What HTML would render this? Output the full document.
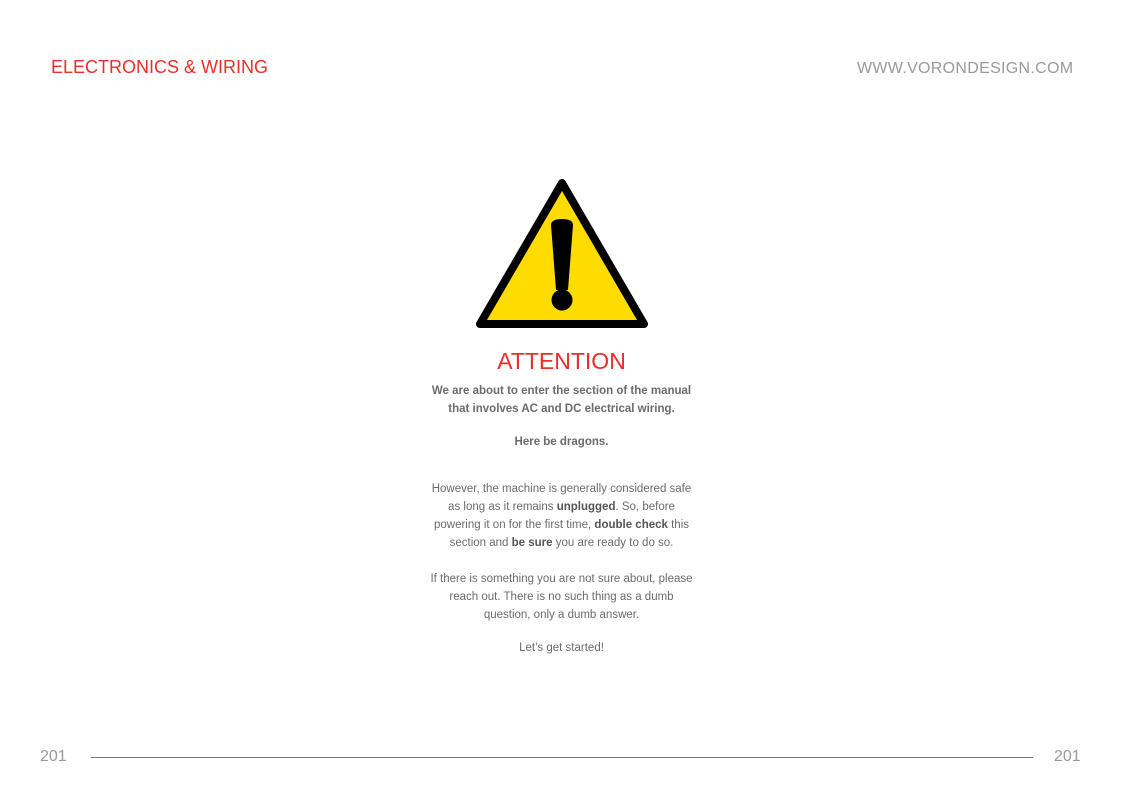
<!DOCTYPE html>
<html><head><meta charset="utf-8"><style>
body{margin:0;width:1123px;height:794px;background:#fff;position:relative;font-family:"Liberation Sans",sans-serif;overflow:hidden}
.a{position:absolute;white-space:nowrap}
.c{position:absolute;left:0;width:1123px;text-align:center;color:#6b6b6b;font-size:11.5px}
b{color:#555}
</style></head><body>
<div class="a" style="left:51px;top:57px;font-size:18px;color:#e8302a">ELECTRONICS &amp; WIRING</div>
<div class="a" style="left:857px;top:60px;font-size:16px;color:#9a9a9a;letter-spacing:0.3px">WWW.VORONDESIGN.COM</div>
<svg class="a" style="left:470px;top:175px" width="184" height="160" viewBox="470 175 184 160">
<path d="M562 183 L644 324 L480 324 Z" fill="#ffdc00" stroke="#000" stroke-width="8" stroke-linejoin="round"/>
<path d="M551 225 Q551 219 562 219 Q573 219 573 225 L568 290 L556 290 Z" fill="#000"/>
<circle cx="562" cy="300" r="10.5" fill="#000"/>
</svg>
<div class="c" style="top:348px;font-size:23px;color:#e8302a">ATTENTION</div>
<div class="c" style="top:382px;font-weight:bold;line-height:18px">We are about to enter the section of the manual<br>that involves AC and DC electrical wiring.</div>
<div class="c" style="top:436px;font-weight:bold">Here be dragons.</div>
<div class="c" style="top:480px;line-height:18px">However, the machine is generally considered safe<br>as long as it remains <b>unplugged</b>. So, before<br>powering it on for the first time, <b>double check</b> this<br>section and <b>be sure</b> you are ready to do so.</div>
<div class="c" style="top:570px;line-height:18px">If there is something you are not sure about, please<br>reach out. There is no such thing as a dumb<br>question, only a dumb answer.</div>
<div class="c" style="top:642px">Let’s get started!</div>
<div class="a" style="left:40px;top:748px;font-size:16px;color:#9a9a9a">201</div>
<div class="a" style="left:1054px;top:748px;font-size:16px;color:#9a9a9a">201</div>
<div class="a" style="left:91px;top:757px;width:942px;height:1px;background:#777"></div>
</body></html>
